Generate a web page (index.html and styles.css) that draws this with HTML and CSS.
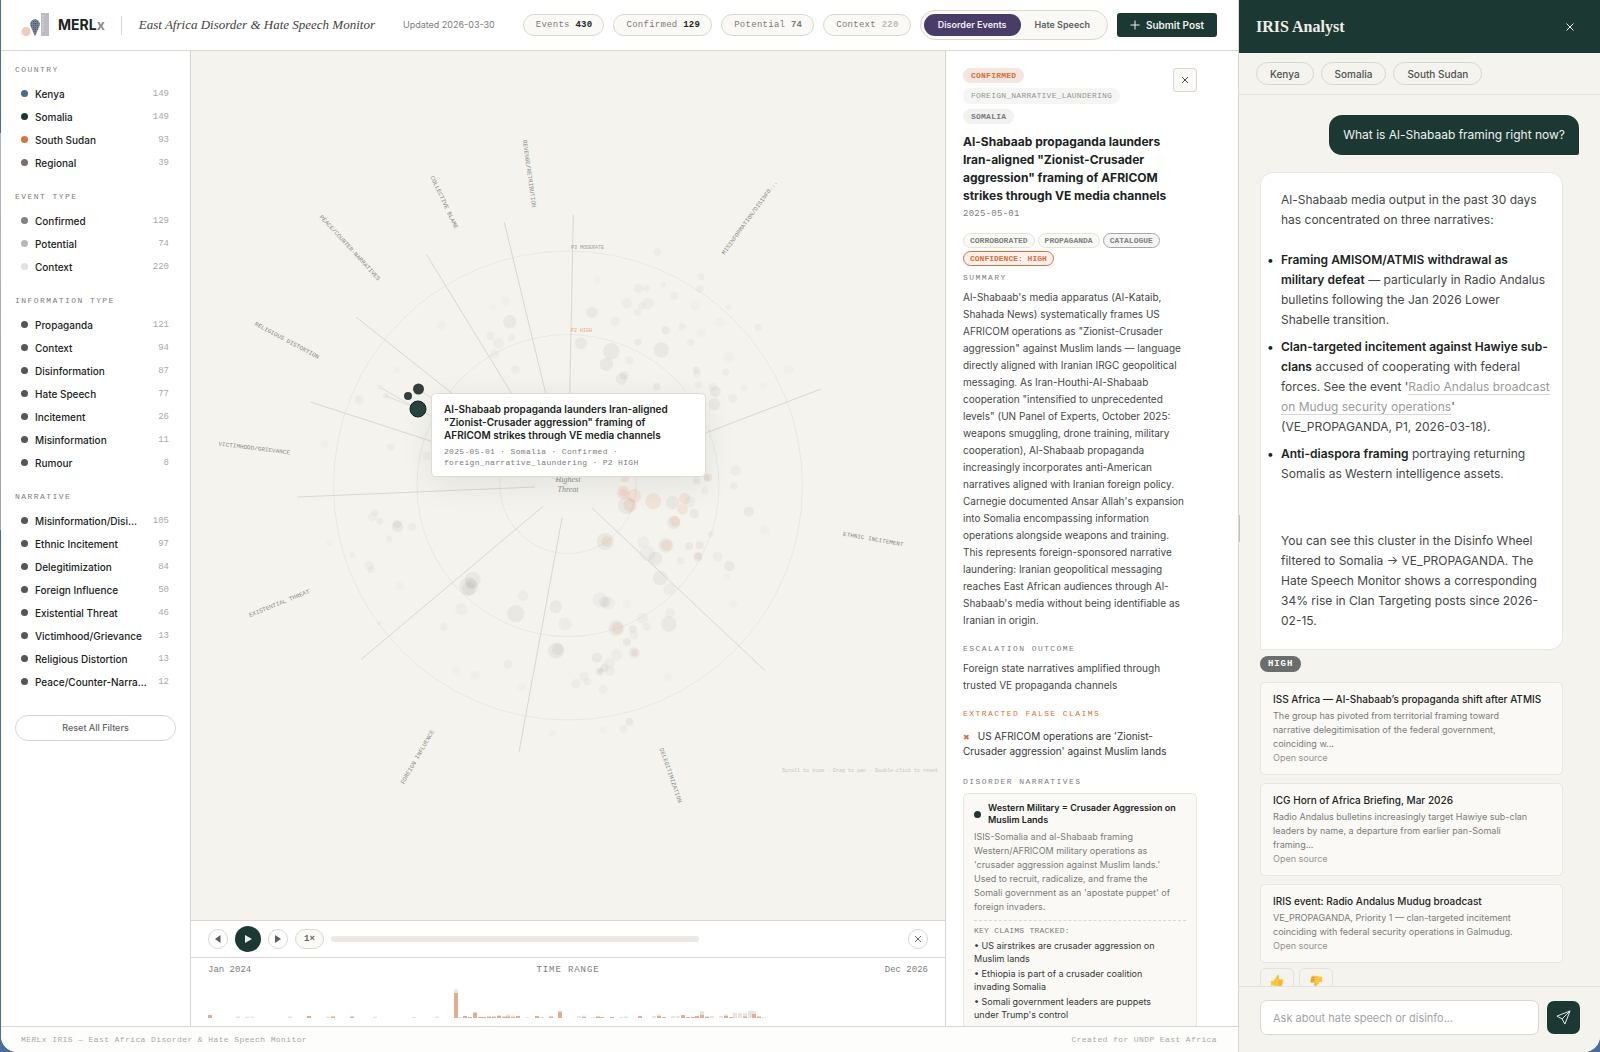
FILE: index.html
```html
<!DOCTYPE html>
<html lang="en">
<head>
<meta charset="utf-8">
<meta name="viewport" content="width=device-width, initial-scale=1">
<title>MERLx IRIS — East Africa Disorder &amp; Hate Speech Monitor</title>
<link rel="stylesheet" href="styles.css">
</head>
<body>
<div class="app">
  <div class="monitor">
    <header class="topbar">
      <svg class="logo" viewBox="0 0 30 24" aria-hidden="true">
        <defs>
          <pattern id="weave" width="2" height="2" patternUnits="userSpaceOnUse"><rect width="2" height="2" fill="#7c7f84"/><rect width="1" height="1" fill="#3f5b96"/></pattern>
        </defs>
        <circle cx="5" cy="18.500" r="4.500" fill="#f0cdb8"/>
        <path d="M14 23.500 L10 14 A4.700 5 0 1 1 18 14 Z" fill="url(#weave)"/>
        <rect x="20" y="0" width="8" height="23" fill="#bdbcc4"/>
        <path d="M21 3h2M21 6h2M21 9h2M21 12h2M21 15h2M21 18h2" stroke="#dcdbe0"/>
      </svg>
      <strong class="brand">MERL<span>x</span></strong>
      <span class="rule"></span>
      <h1 class="title">East Africa Disorder &amp; Hate Speech Monitor</h1>
      <span class="updated">Updated 2026-03-30</span>
      <div class="topbar-end">
        <span class="stat">Events <b>430</b></span>
        <span class="stat">Confirmed <b>129</b></span>
        <span class="stat stat-mid">Potential <b>74</b></span>
        <span class="stat stat-dim">Context <b>220</b></span>
        <div class="toggle">
          <button class="toggle-item is-active" type="button">Disorder Events</button>
          <button class="toggle-item" type="button">Hate Speech</button>
        </div>
        <button class="submit" type="button"><svg viewBox="0 0 10 10" aria-hidden="true"><path d="M5 .5v9M.5 5h9"/></svg>Submit Post</button>
      </div>
    </header>

    <div class="workspace">
      <nav class="filters" aria-label="Filters">
        <section>
          <h2 class="label">Country</h2>
          <button class="filter" type="button"><i class="dot blue"></i><span>Kenya</span><em>149</em></button>
          <button class="filter" type="button"><i class="dot green"></i><span>Somalia</span><em>149</em></button>
          <button class="filter" type="button"><i class="dot orange"></i><span>South Sudan</span><em>93</em></button>
          <button class="filter" type="button"><i class="dot taupe"></i><span>Regional</span><em>39</em></button>
        </section>
        <section>
          <h2 class="label">Event Type</h2>
          <button class="filter" type="button"><i class="dot gray"></i><span>Confirmed</span><em>129</em></button>
          <button class="filter" type="button"><i class="dot silver"></i><span>Potential</span><em>74</em></button>
          <button class="filter" type="button"><i class="dot pale"></i><span>Context</span><em>220</em></button>
        </section>
        <section>
          <h2 class="label">Information Type</h2>
          <button class="filter" type="button"><i class="dot"></i><span>Propaganda</span><em>121</em></button>
          <button class="filter" type="button"><i class="dot"></i><span>Context</span><em>94</em></button>
          <button class="filter" type="button"><i class="dot"></i><span>Disinformation</span><em>87</em></button>
          <button class="filter" type="button"><i class="dot"></i><span>Hate Speech</span><em>77</em></button>
          <button class="filter" type="button"><i class="dot"></i><span>Incitement</span><em>26</em></button>
          <button class="filter" type="button"><i class="dot"></i><span>Misinformation</span><em>11</em></button>
          <button class="filter" type="button"><i class="dot"></i><span>Rumour</span><em>8</em></button>
        </section>
        <section>
          <h2 class="label">Narrative</h2>
          <button class="filter" type="button"><i class="dot"></i><span>Misinformation/Disi...</span><em>105</em></button>
          <button class="filter" type="button"><i class="dot"></i><span>Ethnic Incitement</span><em>97</em></button>
          <button class="filter" type="button"><i class="dot"></i><span>Delegitimization</span><em>84</em></button>
          <button class="filter" type="button"><i class="dot"></i><span>Foreign Influence</span><em>50</em></button>
          <button class="filter" type="button"><i class="dot"></i><span>Existential Threat</span><em>46</em></button>
          <button class="filter" type="button"><i class="dot"></i><span>Victimhood/Grievance</span><em>13</em></button>
          <button class="filter" type="button"><i class="dot"></i><span>Religious Distortion</span><em>13</em></button>
          <button class="filter" type="button"><i class="dot"></i><span>Peace/Counter-Narra...</span><em>12</em></button>
        </section>
        <button class="reset" type="button">Reset All Filters</button>
      </nav>

      <main class="stage">
        <div class="wheel">
          <svg class="wheel-svg" viewBox="191 51 754 869" role="img" aria-label="Narrative wheel">
            <g class="rings">
              <circle cx="568" cy="485.500" r="68"/><circle cx="568" cy="485.500" r="151"/><circle cx="568" cy="485.500" r="234.500"/>
            </g>
            <g class="bubbles" transform="translate(560 120) scale(.3333)">
              <circle cx="292" cy="396" r="11"/><circle cx="423" cy="470" r="11"/><circle cx="420" cy="507" r="11"/><circle cx="505" cy="562" r="8"/><circle cx="595" cy="623" r="11"/><circle cx="236" cy="505" r="14"/><circle cx="260" cy="504" r="10"/><circle cx="310" cy="494" r="8"/><circle cx="200" cy="550" r="16"/><circle cx="264" cy="551" r="17"/><circle cx="232" cy="577" r="11"/><circle cx="245" cy="558" r="11"/><circle class="d" cx="96" cy="577" r="17"/><circle cx="166" cy="603" r="14"/><circle class="d" cx="317" cy="631" r="12"/><circle cx="366" cy="621" r="11"/><circle cx="392" cy="668" r="11"/><circle class="d" cx="63" cy="670" r="18"/><circle class="d" cx="154" cy="694" r="25"/><circle class="d" cx="139" cy="733" r="20"/><circle class="d" cx="304" cy="690" r="23"/><circle class="d" cx="234" cy="667" r="10"/><circle cx="208" cy="721" r="12"/><circle class="d" cx="184" cy="777" r="17"/><circle class="d" cx="192" cy="766" r="13"/><circle class="d" cx="290" cy="800" r="11"/><circle class="d" cx="409" cy="750" r="10"/><circle cx="412" cy="762" r="11"/><circle cx="416" cy="795" r="11"/><circle cx="497" cy="757" r="11"/><circle class="d" cx="466" cy="815" r="16"/><circle cx="458" cy="801" r="13"/><circle class="d" cx="463" cy="853" r="18"/><circle cx="518" cy="836" r="14"/><circle cx="552" cy="805" r="9"/><circle cx="343" cy="527" r="12"/><circle class="l" cx="406" cy="555" r="16"/><circle class="l" cx="112" cy="480" r="13"/><circle class="l" cx="424" cy="640" r="12"/><circle class="l" cx="480" cy="608" r="14"/><circle class="l" cx="507" cy="712" r="16"/><circle class="l" cx="686" cy="748" r="16"/><circle class="l" cx="610" cy="796" r="11"/><circle cx="527" cy="1052" r="16"/><circle cx="522" cy="1098" r="13"/><circle class="d" cx="567" cy="1175" r="15"/><circle cx="434" cy="1112" r="11"/><circle class="d" cx="410" cy="1082" r="11"/><circle class="d" cx="444" cy="1072" r="13"/><circle class="d" cx="338" cy="1148" r="20"/><circle class="d" cx="200" cy="1156" r="26"/><circle class="d" cx="403" cy="1181" r="14"/><circle cx="390" cy="1145" r="17"/>
            </g>
            <g class="bubbles" transform="translate(560 460) scale(.3333)">
              <circle class="d" cx="341" cy="188" r="20"/><circle class="d" cx="136" cy="244" r="26"/><circle cx="250" cy="246" r="18"/><circle cx="262" cy="280" r="24"/><circle class="d" cx="286" cy="296" r="21"/><circle class="d" cx="318" cy="256" r="22"/><circle class="d" cx="387" cy="258" r="12"/><circle class="d" cx="419" cy="256" r="12"/><circle class="d" cx="414" cy="291" r="14"/><circle cx="362" cy="302" r="12"/><circle cx="473" cy="290" r="15"/><circle class="d" cx="508" cy="318" r="16"/><circle class="l" cx="500" cy="350" r="11"/><circle class="l" cx="614" cy="208" r="14"/><circle class="d" cx="301" cy="354" r="22"/><circle cx="328" cy="388" r="18"/><circle cx="120" cy="420" r="23"/><circle class="d" cx="134" cy="426" r="17"/><circle cx="145" cy="430" r="20"/><circle class="l" cx="200" cy="431" r="14"/><circle cx="330" cy="459" r="15"/><circle class="d" cx="326" cy="492" r="23"/><circle cx="248" cy="474" r="16"/><circle cx="260" cy="500" r="13"/><circle class="d" cx="219" cy="507" r="12"/><circle cx="222" cy="526" r="12"/><circle class="d" cx="169" cy="505" r="24"/><circle cx="15" cy="492" r="20"/><circle class="d" cx="201" cy="546" r="12"/><circle class="d" cx="223" cy="578" r="16"/><circle cx="170" cy="585" r="17"/><circle class="d" cx="111" cy="593" r="15"/><circle cx="148" cy="610" r="16"/><circle class="d" cx="133" cy="624" r="13"/><circle cx="150" cy="634" r="15"/><circle class="d" cx="120" cy="635" r="12"/><circle cx="48" cy="671" r="14"/><circle cx="72" cy="650" r="14"/><circle cx="81" cy="665" r="11"/><circle cx="129" cy="688" r="14"/><circle class="l" cx="324" cy="651" r="13"/><circle class="d" cx="208" cy="785" r="12"/><circle cx="190" cy="807" r="13"/><circle class="l" cx="129" cy="810" r="10"/><circle class="l" cx="521" cy="432" r="12"/><circle cx="453" cy="223" r="9"/>
            </g>
            <g class="bubbles" transform="translate(200 460) scale(.3333)">
              <circle cx="518" cy="170" r="14"/><circle cx="525" cy="157" r="11"/><circle cx="539" cy="184" r="11"/><circle class="d" cx="591" cy="192" r="13"/><circle class="d" cx="593" cy="200" r="17"/><circle cx="637" cy="200" r="12"/><circle cx="568" cy="236" r="10"/><circle cx="457" cy="285" r="8"/><circle class="l" cx="389" cy="249" r="10"/><circle cx="507" cy="317" r="14"/><circle cx="514" cy="329" r="11"/><circle class="d" cx="818" cy="360" r="24"/><circle class="d" cx="814" cy="372" r="16"/><circle class="d" cx="806" cy="380" r="28"/><circle class="d" cx="806" cy="386" r="20"/><circle cx="784" cy="448" r="18"/><circle cx="731" cy="501" r="12"/><circle cx="969" cy="407" r="16"/><circle class="d" cx="947" cy="461" r="26"/><circle class="d" cx="1067" cy="440" r="19"/><circle class="d" cx="1068" cy="572" r="24"/><circle class="d" cx="1074" cy="568" r="18"/><circle cx="923" cy="613" r="13"/><circle class="l" cx="600" cy="378" r="14"/><circle class="l" cx="826" cy="646" r="14"/><circle class="l" cx="770" cy="634" r="13"/><circle class="l" cx="966" cy="682" r="13"/><circle class="l" cx="1058" cy="820" r="10"/><circle cx="538" cy="490" r="7"/>
            </g>
            <g class="bubbles" transform="translate(200 120) scale(.3333)">
              <circle class="d" cx="929" cy="605" r="20"/><circle cx="872" cy="648" r="13"/><circle cx="935" cy="653" r="11"/><circle cx="896" cy="670" r="16"/><circle cx="883" cy="702" r="14"/><circle cx="946" cy="749" r="13"/><circle class="l" cx="918" cy="543" r="14"/><circle class="l" cx="878" cy="560" r="10"/><circle class="l" cx="726" cy="617" r="14"/><circle class="l" cx="592" cy="750" r="10"/><circle cx="478" cy="840" r="14"/><circle cx="572" cy="982" r="12"/><circle cx="680" cy="1008" r="13"/><circle cx="541" cy="802" r="8"/><circle cx="557" cy="827" r="9"/><circle class="l" cx="375" cy="972" r="11"/>
            </g>
            <g class="hot" transform="translate(560 460) scale(.3333)">
              <circle cx="195" cy="55" r="12"/><circle cx="190" cy="98" r="20"/><circle cx="190" cy="98" r="12"/><circle cx="222" cy="108" r="21"/><circle cx="210" cy="135" r="20"/><circle cx="280" cy="124" r="24"/><circle cx="374" cy="116" r="17"/><circle cx="368" cy="148" r="16"/><circle cx="345" cy="184" r="16"/><circle cx="140" cy="244" r="16"/><circle cx="320" cy="256" r="16"/><circle cx="414" cy="288" r="10"/><circle cx="172" cy="504" r="17"/><circle cx="224" cy="578" r="10"/><circle cx="120" cy="634" r="7"/><circle cx="440" cy="53" r="9"/>
            </g>
            <path class="spokes" d="M550.700 457.300 426.500 254.500M560.200 453.400 504.300 222.300M568.600 452.500 573.300 215M598.900 473.700 821 389M592 508 765 670.500M562 518 519 752M542.700 506.700 361 659.500M535 487 297.500 497M536.600 475.300 310.500 402M542.100 464.900 356 317"/>
            <path class="links" d="M380.500 387.500 417.500 409M385.500 395.500 417.500 409 568 485.500M418.500 389 440 404"/>
            <g class="picked"><circle cx="418.500" cy="389" r="5.500"/><circle cx="408" cy="396" r="4"/><circle class="current" cx="418" cy="409" r="8"/></g>
            <g class="axis">
              <text transform="translate(527.500 174) rotate(82)">REVENGE/RETRIBUTION</text>
              <text transform="translate(442.500 203) rotate(65)">COLLECTIVE BLAME</text>
              <text transform="translate(348.500 249) rotate(47.500)">PEACE/COUNTER-NARRATIVES</text>
              <text transform="translate(286 342) rotate(28)">RELIGIOUS DISTORTION</text>
              <text transform="translate(254 450) rotate(7)">VICTIMHOOD/GRIEVANCE</text>
              <text transform="translate(280 605) rotate(-22)">EXISTENTIAL THREAT</text>
              <text transform="translate(419 758) rotate(-60)">FOREIGN INFLUENCE</text>
              <text transform="translate(669 776) rotate(71)">DELEGITIMIZATION</text>
              <text transform="translate(873 541) rotate(10)">ETHNIC INCITEMENT</text>
              <text transform="translate(751 218.500) rotate(-54)">MISINFORMATION/DISINFO...</text>
            </g>
            <text class="ring-name" x="571" y="249">P3 MODERATE</text>
            <text class="ring-name ring-high" x="571" y="332">P2 HIGH</text>
            <text class="center-name" x="568" y="482">Highest</text>
            <text class="center-name" x="568" y="492">Threat</text>
            <text class="hint" x="938" y="772">Scroll to zoom · Drag to pan · Double-click to reset</text>
          </svg>
          <div class="tooltip" role="tooltip">
            <strong>Al-Shabaab propaganda launders Iran-aligned "Zionist-Crusader aggression" framing of AFRICOM strikes through VE media channels</strong>
            <span>2025-05-01 · Somalia · Confirmed ·<br>foreign_narrative_laundering · P2 HIGH</span>
          </div>
        </div>

        <div class="player">
          <button class="round" type="button" aria-label="Previous"><svg viewBox="0 0 10 10"><path d="M7.500 1v8L2 5z"/></svg></button>
          <button class="round play" type="button" aria-label="Play"><svg viewBox="0 0 10 10"><path d="M2 1v8l7-4z"/></svg></button>
          <button class="round" type="button" aria-label="Next"><svg viewBox="0 0 10 10"><path d="M2 1v8l6-4z"/></svg></button>
          <button class="speed" type="button">1×</button>
          <div class="track"></div>
          <button class="round stop" type="button" aria-label="Close"><svg viewBox="0 0 10 10"><path d="M2 2l6 6M8 2l-6 6"/></svg></button>
        </div>

        <section class="range">
          <div class="range-head"><span>Jan 2024</span><h2>TIME RANGE</h2><span>Dec 2026</span></div>
          <svg class="bars" viewBox="0 0 720 30" preserveAspectRatio="none" aria-hidden="true">
            <path class="bars-all" d="M30 30v-1.500M39 30v-1.500M44 30v-1.500M82 30v-1.500M120 30v-1.500M167 30v-1.500M206 30v-1M229 30v-1.500M248 30v-28.500M252 30v-1M286 30v-2M291 30v-3M296 30v-2M300 30v-3.500M305 30v-2.500M319 30v-1M334 30v-1M371 30v-2M376 30v-2.500M385 30v-1M413 30v-1M418 30v-1.500M446 30v-2M451 30v-3.500M465 30v-2M470 30v-2M494 30v-7M499 30v-2M504 30v-2M513 30v-2M518 30v-3.500M527 30v-5M532 30v-5M537 30v-5M542 30v-7M546 30v-7M556 30v-1"/>
            <path class="bars-hot" d="M2 30v-3M101 30v-2M125 30v-1.500M144 30v-1.500M248 30v-25M257 30v-2M262 30v-1M267 30v-5.500M272 30v-1M276 30v-1M281 30v-1.500M286 30v-1M291 30v-2M296 30v-1M300 30v-1.500M305 30v-1M310 30v-2M329 30v-2M343 30v-1.500M352 30v-6.500M376 30v-1M390 30v-1.500M394 30v-1M404 30v-1M432 30v-2M451 30v-2M456 30v-1M475 30v-3M480 30v-1M485 30v-1M489 30v-2M494 30v-3M499 30v-1M518 30v-2M523 30v-1M537 30v-1.500M546 30v-4M551 30v-1.500"/>
          </svg>
        </section>
      </main>

      <article class="detail">
        <div class="detail-top">
          <div class="badges">
            <span class="badge badge-hot">CONFIRMED</span>
            <span class="badge badge-light">FOREIGN_NARRATIVE_LAUNDERING</span>
            <span class="badge">SOMALIA</span>
          </div>
          <button class="close" type="button" aria-label="Close details"><svg viewBox="0 0 10 10"><path d="M2 2l6 6M8 2l-6 6"/></svg></button>
        </div>
        <h2 class="detail-title">Al-Shabaab propaganda launders Iran-aligned "Zionist-Crusader aggression" framing of AFRICOM strikes through VE media channels</h2>
        <time class="date">2025-05-01</time>
        <div class="tags">
          <span class="tag">CORROBORATED</span><span class="tag">PROPAGANDA</span><span class="tag tag-strong">CATALOGUE</span><span class="tag tag-hot">CONFIDENCE: HIGH</span>
        </div>
        <h3 class="label">Summary</h3>
        <p class="prose">Al-Shabaab's media apparatus (Al-Kataib, Shahada News) systematically frames US AFRICOM operations as "Zionist-Crusader aggression" against Muslim lands — language directly aligned with Iranian IRGC geopolitical messaging. As Iran-Houthi-Al-Shabaab cooperation "intensified to unprecedented levels" (UN Panel of Experts, October 2025: weapons smuggling, drone training, military cooperation), Al-Shabaab propaganda increasingly incorporates anti-American narratives aligned with Iranian foreign policy. Carnegie documented Ansar Allah's expansion into Somalia encompassing information operations alongside weapons and training. This represents foreign-sponsored narrative laundering: Iranian geopolitical messaging reaches East African audiences through Al-Shabaab's media without being identifiable as Iranian in origin.</p>
        <h3 class="label">Escalation Outcome</h3>
        <p class="prose">Foreign state narratives amplified through trusted VE propaganda channels</p>
        <h3 class="label label-hot">Extracted False Claims</h3>
        <p class="claim"><b>✖</b>US AFRICOM operations are 'Zionist-Crusader aggression' against Muslim lands</p>
        <h3 class="label">Disorder Narratives</h3>
        <div class="narrative">
          <div class="narrative-head"><i class="dot green"></i><strong>Western Military = Crusader Aggression on Muslim Lands</strong></div>
          <p>ISIS-Somalia and al-Shabaab framing Western/AFRICOM military operations as 'crusader aggression against Muslim lands.' Used to recruit, radicalize, and frame the Somali government as an 'apostate puppet' of foreign invaders.</p>
          <h4>KEY CLAIMS TRACKED:</h4>
          <ul>
            <li>• US airstrikes are crusader aggression on Muslim lands</li>
            <li>• Ethiopia is part of a crusader coalition invading Somalia</li>
            <li>• Somali government leaders are puppets under Trump's control</li>
          </ul>
        </div>
      </article>
    </div>

    <footer class="footer"><span>MERLx IRIS — East Africa Disorder &amp; Hate Speech Monitor</span><span>Created for UNDP East Africa</span></footer>
  </div>

  <aside class="chat">
    <span class="grip"></span>
    <header class="chat-head"><h2>IRIS Analyst</h2><button type="button" aria-label="Close analyst"><svg viewBox="0 0 10 10"><path d="M1.500 1.500l7 7M8.500 1.500l-7 7"/></svg></button></header>
    <div class="chips"><button type="button">Kenya</button><button type="button">Somalia</button><button type="button">South Sudan</button></div>
    <div class="thread">
      <p class="question">What is Al-Shabaab framing right now?</p>
      <div class="answer">
        <p>Al-Shabaab media output in the past 30 days has concentrated on three narratives:</p>
        <ul>
          <li><strong>Framing AMISOM/ATMIS withdrawal as military defeat</strong> — particularly in Radio Andalus bulletins following the Jan 2026 Lower Shabelle transition.</li>
          <li><strong>Clan-targeted incitement against Hawiye sub-clans</strong> accused of cooperating with federal forces. See the event '<a href="#event">Radio Andalus broadcast on Mudug security operations</a>' (VE_PROPAGANDA, P1, 2026-03-18).</li>
          <li><strong>Anti-diaspora framing</strong> portraying returning Somalis as Western intelligence assets.</li>
        </ul>
        <p>You can see this cluster in the Disinfo Wheel filtered to Somalia → VE_PROPAGANDA. The Hate Speech Monitor shows a corresponding 34% rise in Clan Targeting posts since 2026-02-15.</p>
      </div>
      <span class="level">HIGH</span>
      <div class="sources">
        <div class="source"><strong>ISS Africa — Al-Shabaab’s propaganda shift after ATMIS</strong><p>The group has pivoted from territorial framing toward narrative delegitimisation of the federal government, coinciding w...</p><a href="#source-1">Open source</a></div>
        <div class="source"><strong>ICG Horn of Africa Briefing, Mar 2026</strong><p>Radio Andalus bulletins increasingly target Hawiye sub-clan leaders by name, a departure from earlier pan-Somali framing...</p><a href="#source-2">Open source</a></div>
        <div class="source"><strong>IRIS event: Radio Andalus Mudug broadcast</strong><p>VE_PROPAGANDA, Priority 1 — clan-targeted incitement coinciding with federal security operations in Galmudug.</p><a href="#source-3">Open source</a></div>
      </div>
      <div class="votes">
        <button type="button" aria-label="Helpful"><svg viewBox="0 0 16 16"><path d="M1 8h3l4-6c.5-2 2.500-1.500 2.500.5L10 6h4c1.500 0 1.500 2 .5 2.200 1 .6.700 2-.3 2.200.6.7.300 1.800-.6 2 .3.900-.3 1.600-1.300 1.600H7l-3-1H1z" fill="#fcc63c"/><path d="M10 8.200h4.500M10 10.400h4M10 12.400h3.500" stroke="#e09b28" stroke-width=".7"/></svg></button>
        <button type="button" aria-label="Not helpful"><svg viewBox="0 0 16 16"><path d="M15 3v6h-3l-3 4c-.5 2-3 1.700-2.500-.5L7 10H2.500C1 10 1 8 2 7.800 1 7.200 1.300 6 2.300 5.600 1.700 5 2 3.900 3 3.700 2.700 2.800 3.300 2 4.300 2H9l3 1z" fill="#fcc63c"/><path d="M6.500 4H3M6.500 6H2.300M6.500 8H2M7 10l-.5 3" stroke="#c9741e" stroke-width=".7"/></svg></button>
      </div>
    </div>
    <form class="composer">
      <input type="text" aria-label="Question" placeholder="Ask about hate speech or disinfo...">
      <button type="button" aria-label="Send"><svg viewBox="0 0 16 16"><path d="M15 1 1 6.500l5.500 3L9.500 15zM15 1 6.500 9.500"/></svg></button>
    </form>
  </aside>
</div>
</body>
</html>
```
FILE: styles.css
```css
:root {
  --ink: #1a2422;
  --text: #444746;
  --muted: #7b7c7b;
  --faint: #a9a9a6;
  --line: #d9d8d0;
  --canvas: #f4f3ee;
  --soft: #faf9f6;
  --green: #1c3833;
  --orange: #d9703a;
  --mono: "Liberation Mono", monospace;
  --serif: "Liberation Serif", serif;
}

* { box-sizing: border-box; margin: 0; padding: 0; }

body {
  background: linear-gradient(#4a6c9e 133px, #b5b5b5 133px, #a5a5a5 530px, #4a6c9e 530px);
  color: var(--ink);
  font: 10px/14px Inter, sans-serif;
}

button { font: inherit; color: inherit; background: none; border: 0; cursor: pointer; }
ul { list-style: none; }
svg { display: block; }

.app {
  display: grid;
  grid-template-columns: minmax(0, 1fr) 361px;
  height: 100vh;
  margin-left: 1px;
  background: #fff;
  border-radius: 0 0 16px 16px;
  overflow: hidden;
}

.monitor { display: flex; flex-direction: column; min-width: 0; min-height: 0; border-right: 1px solid var(--line); }

.label {
  color: var(--muted);
  font: 8px/12px var(--mono);
  letter-spacing: .18em;
  text-transform: uppercase;
}
.label-hot { color: var(--orange); }

.dot { flex: none; width: 7px; height: 7px; border-radius: 50%; background: #555756; }
.blue { background: #4a6799; }
.green { background: var(--green); }
.orange { background: #d6743c; }
.taupe { background: #7b706a; }
.gray { background: #828282; }
.silver { background: #b8b8b8; }
.pale { background: #e3e2dd; }

/* Top bar */
.topbar { display: flex; align-items: center; height: 51px; padding: 0 21px 0 20px; border-bottom: 1px solid var(--line); white-space: nowrap; }
.logo { flex: none; width: 30px; height: 24px; margin-right: 7px; }
.brand { font-size: 14px; font-weight: 700; }
.brand span { color: #8c8e90; }
.rule { flex: none; width: 1px; height: 19px; margin: 0 17px 0 16px; background: var(--line); }
.title { font: italic 13px/20px var(--serif); color: #3f4241; }
.updated { margin-left: 28px; color: var(--muted); font-size: 9px; }
.topbar-end { display: flex; align-items: center; gap: 9px; margin-left: auto; }
.stat { padding: 0 11px 0 12px; border: 1px solid var(--line); border-radius: 11px; background: var(--soft); color: var(--muted); font: 9px/20px var(--mono); letter-spacing: .03em; }
.stat b { color: var(--ink); }
.stat-mid b { color: var(--muted); }
.stat-dim b { color: #bbb; }
.toggle { display: flex; padding: 3px; border: 1px solid var(--line); border-radius: 15px; background: var(--soft); }
.toggle-item { height: 22px; padding: 0 14px; border-radius: 11px; color: #5e605f; font-size: 9px; font-weight: 600; }
.toggle-item.is-active { background: #493c68; color: #f1eff5; }
.submit { display: flex; align-items: center; gap: 6px; height: 24px; padding: 0 13px; border-radius: 3px; background: var(--green); color: #eef1ef; font-weight: 600; }
.submit svg { width: 10px; height: 10px; stroke: currentColor; }

/* Columns */
.workspace { display: grid; grid-template-columns: 190px minmax(0, 1fr) 293px; flex: 1; min-height: 0; }

.filters { display: flex; flex-direction: column; gap: 17px; padding: 13px 14px; border-right: 1px solid var(--line); }
.filters .label { margin-bottom: 6px; }
.filter { display: flex; align-items: center; gap: 7px; width: 100%; height: 23px; padding: 0 7px 0 6px; text-align: left; white-space: nowrap; }
.filter span { flex: 1; font-weight: 500; }
.filter em { color: var(--faint); font: 9px/12px var(--mono); }
.reset { height: 26px; margin-top: 5px; border: 1px solid var(--line); border-radius: 13px; color: #616362; font-size: 9px; font-weight: 500; }

.stage { display: flex; flex-direction: column; min-width: 0; min-height: 0; }
.wheel { position: relative; flex: 1; min-height: 0; background: var(--canvas); }
.wheel-svg { width: 100%; height: 100%; }
.rings circle { fill: none; stroke: #e9e8e4; }
.bubbles { fill: #8a8a88; fill-opacity: .06; }
.bubbles .d { fill-opacity: .1; }
.bubbles .l { fill-opacity: .03; }
.hot { fill: #ee9468; fill-opacity: .16; }
.spokes { fill: none; stroke: #d8d7d3; stroke-width: 1; }
.links { fill: none; stroke: #dddcd8; stroke-width: 1; }
.picked { fill: #343f3d; }
.picked .current { fill: #294540; stroke: #10201d; stroke-width: 1; }
.axis { fill: #8a8b88; font: 6px var(--mono); text-anchor: middle; }
.ring-name { fill: #a2a29f; font: 5px var(--mono); }
.ring-high { fill: #eba384; }
.center-name { fill: #8d8e8b; font: italic 8px var(--serif); text-anchor: middle; }
.hint { fill: #c6c5c0; font: 5px var(--mono); text-anchor: end; }
.tooltip { position: absolute; left: 240px; top: 342px; width: 275px; padding: 9px 12px 8px; border: 1px solid #dddcd6; border-radius: 5px; background: #fff; box-shadow: 0 8px 32px rgba(30, 40, 36, .08); }
.tooltip strong { display: block; margin-bottom: 4px; font-weight: 600; line-height: 13px; }
.tooltip span { display: block; color: var(--muted); font: 8px/11px var(--mono); letter-spacing: .04em; }

.player { display: flex; align-items: center; gap: 7px; height: 37px; padding: 0 17px; border-top: 1px solid var(--line); }
.round { display: grid; place-items: center; flex: none; width: 20px; height: 20px; border: 1px solid var(--line); border-radius: 50%; }
.round svg { width: 10px; height: 10px; fill: #5e605f; }
.play { width: 26px; height: 26px; border: 0; background: var(--green); }
.play svg { fill: #e9eeec; }
.stop { margin-left: 202px; }
.stop svg, .close svg { fill: none; stroke: #6c6e6d; stroke-width: 1; }
.speed { height: 20px; width: 29px; border: 1px solid var(--line); border-radius: 10px; background: var(--soft); color: #616362; font: bold 9px/18px var(--mono); }
.track { flex: 1; height: 6px; border-radius: 3px; background: #ece8e4; }
.range { height: 69px; padding: 5px 17px 8px; border-top: 1px solid var(--line); }
.range-head { display: flex; justify-content: space-between; color: var(--muted); font: 9px/14px var(--mono); }
.range-head h2 { font: inherit; letter-spacing: .1em; }
.bars { width: 100%; height: 30px; margin-top: 11px; }
.bars path { fill: none; stroke-width: 4; }
.bars-all { stroke: #e6e5e1; }
.bars-hot { stroke: #e5ad90; }

/* Event detail */
.detail { min-height: 0; padding: 17px 41px 0 17px; border-left: 1px solid var(--line); overflow-y: auto; scrollbar-width: none; }
.detail-top { display: flex; justify-content: space-between; align-items: flex-start; }
.badges { display: flex; flex-direction: column; align-items: flex-start; gap: 5px; }
.badge { padding: 0 8px; border-radius: 8px; background: #f2f1f0; color: #777b7e; font: bold 8px/15px var(--mono); letter-spacing: .03em; }
.badge-hot { background: #f3e6de; color: var(--orange); }
.badge-light { background: #f5f5f4; color: #929492; font-weight: 400; line-height: 16px; }
.close { display: grid; place-items: center; width: 24px; height: 24px; border: 1px solid var(--line); border-radius: 3px; background: var(--soft); }
.close svg { width: 10px; height: 10px; stroke: #4d4f4e; }
.detail-title { margin-top: 9px; padding-right: 12px; font-size: 12px; line-height: 18px; font-weight: 700; }
.date { display: block; color: var(--muted); font: 9px/18px var(--mono); letter-spacing: .03em; }
.tags { display: flex; flex-wrap: wrap; gap: 3px; margin: 10px 0 6px; }
.tag { padding: 0 6px; border: 1px solid #e4e3dc; border-radius: 8px; background: var(--soft); color: #7f817f; font: bold 8px/13px var(--mono); }
.tag-strong { border-color: #a5a7aa; background: #f4f4f3; }
.tag-hot { border-color: var(--orange); background: #fbf1ec; color: var(--orange); }
.prose { margin: 5px 0 14px; padding-right: 7px; color: var(--text); line-height: 17px; }
.label-hot + .claim { margin: 9px 0 17px; padding-right: 7px; line-height: 15px; color: #343736; }
.claim b { margin-right: 8px; color: var(--orange); font: 8px/10px "DejaVu Sans", sans-serif; }
.narrative { margin-top: 5px; padding: 8px 10px; border: 1px solid #e6e5df; border-radius: 5px; background: var(--soft); font-size: 9px; }
.narrative-head { display: flex; align-items: center; gap: 7px; line-height: 12px; }
.narrative-head strong { font-weight: 600; }
.narrative p { padding: 4px 10px 6px 0; border-bottom: 1px dashed var(--line); color: var(--muted); }
.narrative h4 { margin-top: 4px; color: var(--muted); font: 8px/12px var(--mono); letter-spacing: .03em; }
.narrative li { margin-top: 2px; padding-right: 12px; color: #343736; line-height: 13px; }

.footer { display: flex; justify-content: space-between; align-items: center; height: 26px; padding: 0 21px 0 20px; border-top: 1px solid var(--line); background: #fdfdfc; color: var(--faint); font: 8px/12px var(--mono); letter-spacing: .05em; }

/* Analyst chat */
.chat { position: relative; display: flex; flex-direction: column; min-height: 0; background: var(--canvas); }
.grip { position: absolute; left: 0; top: 49%; width: 1px; height: 27px; background: #c4c3bd; }
.chat-head { display: flex; justify-content: space-between; align-items: center; height: 53px; padding: 0 25px 0 17px; background: var(--green); color: #f1eee8; }
.chat-head h2 { font: bold 16px/20px var(--serif); }
.chat-head svg { width: 10px; height: 10px; stroke: currentColor; stroke-width: 1; }
.chips { display: flex; gap: 7px; padding: 9px 17px; border-bottom: 1px solid #e3e2dd; }
.chips button { height: 23px; padding: 0 13px; border: 1px solid var(--line); border-radius: 12px; color: #4f5251; font-weight: 500; }
.thread { display: flex; flex: 1; flex-direction: column; align-items: flex-start; min-height: 0; padding: 20px 21px 0; overflow: hidden; }
.thread > * { flex: none; }
.question { align-self: flex-end; margin-bottom: 17px; padding: 10px 14px; border-radius: 13px 13px 2px 13px; background: var(--green); color: #eef1ef; font-size: 12px; line-height: 20px; }
.answer { width: calc(100% - 16px); padding: 17px 12px 18px 20px; border: 1px solid #e8e7e2; border-radius: 13px 13px 13px 2px; background: #fff; color: var(--text); font-size: 12px; line-height: 20px; }
.answer ul { margin: 20px 0 47px; list-style: none; }
.answer li { margin-bottom: 7px; }
.answer li::before { content: "•"; float: left; margin-left: -14px; color: var(--ink); }
.answer strong { color: var(--ink); font-weight: 600; }
.answer a { color: #9a9b9a; text-decoration: none; border-bottom: 1px solid #d9d8d4; }
.level { margin: 6px 0 10px; padding: 0 8px; border-radius: 8px; background: #6c6e6d; color: #fff; font: bold 9px/16px var(--mono); letter-spacing: .1em; }
.sources { display: grid; gap: 8px; width: calc(100% - 16px); }
.source { padding: 8px 12px 9px; border: 1px solid #e6e5df; border-radius: 5px; background: var(--soft); font-size: 9px; }
.source strong { display: block; margin-bottom: 2px; font-size: 10px; line-height: 16px; font-weight: 500; }
.source p { padding-right: 14px; color: var(--muted); }
.source a { color: #929392; text-decoration: none; }
.votes { display: flex; gap: 5px; margin-top: 5px; }
.votes button { display: grid; place-items: center; width: 34px; height: 26px; border: 1px solid #e3e2dd; border-radius: 5px; }
.votes svg { width: 14px; height: 14px; }
.composer { display: flex; align-items: center; gap: 8px; padding: 13px 20px 17px 21px; border-top: 1px solid #e3e2dd; }
.composer input { flex: 1; min-width: 0; height: 35px; padding: 0 12px; border: 1px solid var(--line); border-radius: 7px; background: #fff; color: var(--ink); font: 11px/16px Inter, sans-serif; }
.composer input::placeholder { color: #a3a4a3; }
.composer button { display: grid; place-items: center; width: 33px; height: 33px; border-radius: 7px; background: var(--green); }
.composer svg { width: 15px; height: 15px; fill: none; stroke: #eef1ef; stroke-width: 1; stroke-linejoin: round; }
```
